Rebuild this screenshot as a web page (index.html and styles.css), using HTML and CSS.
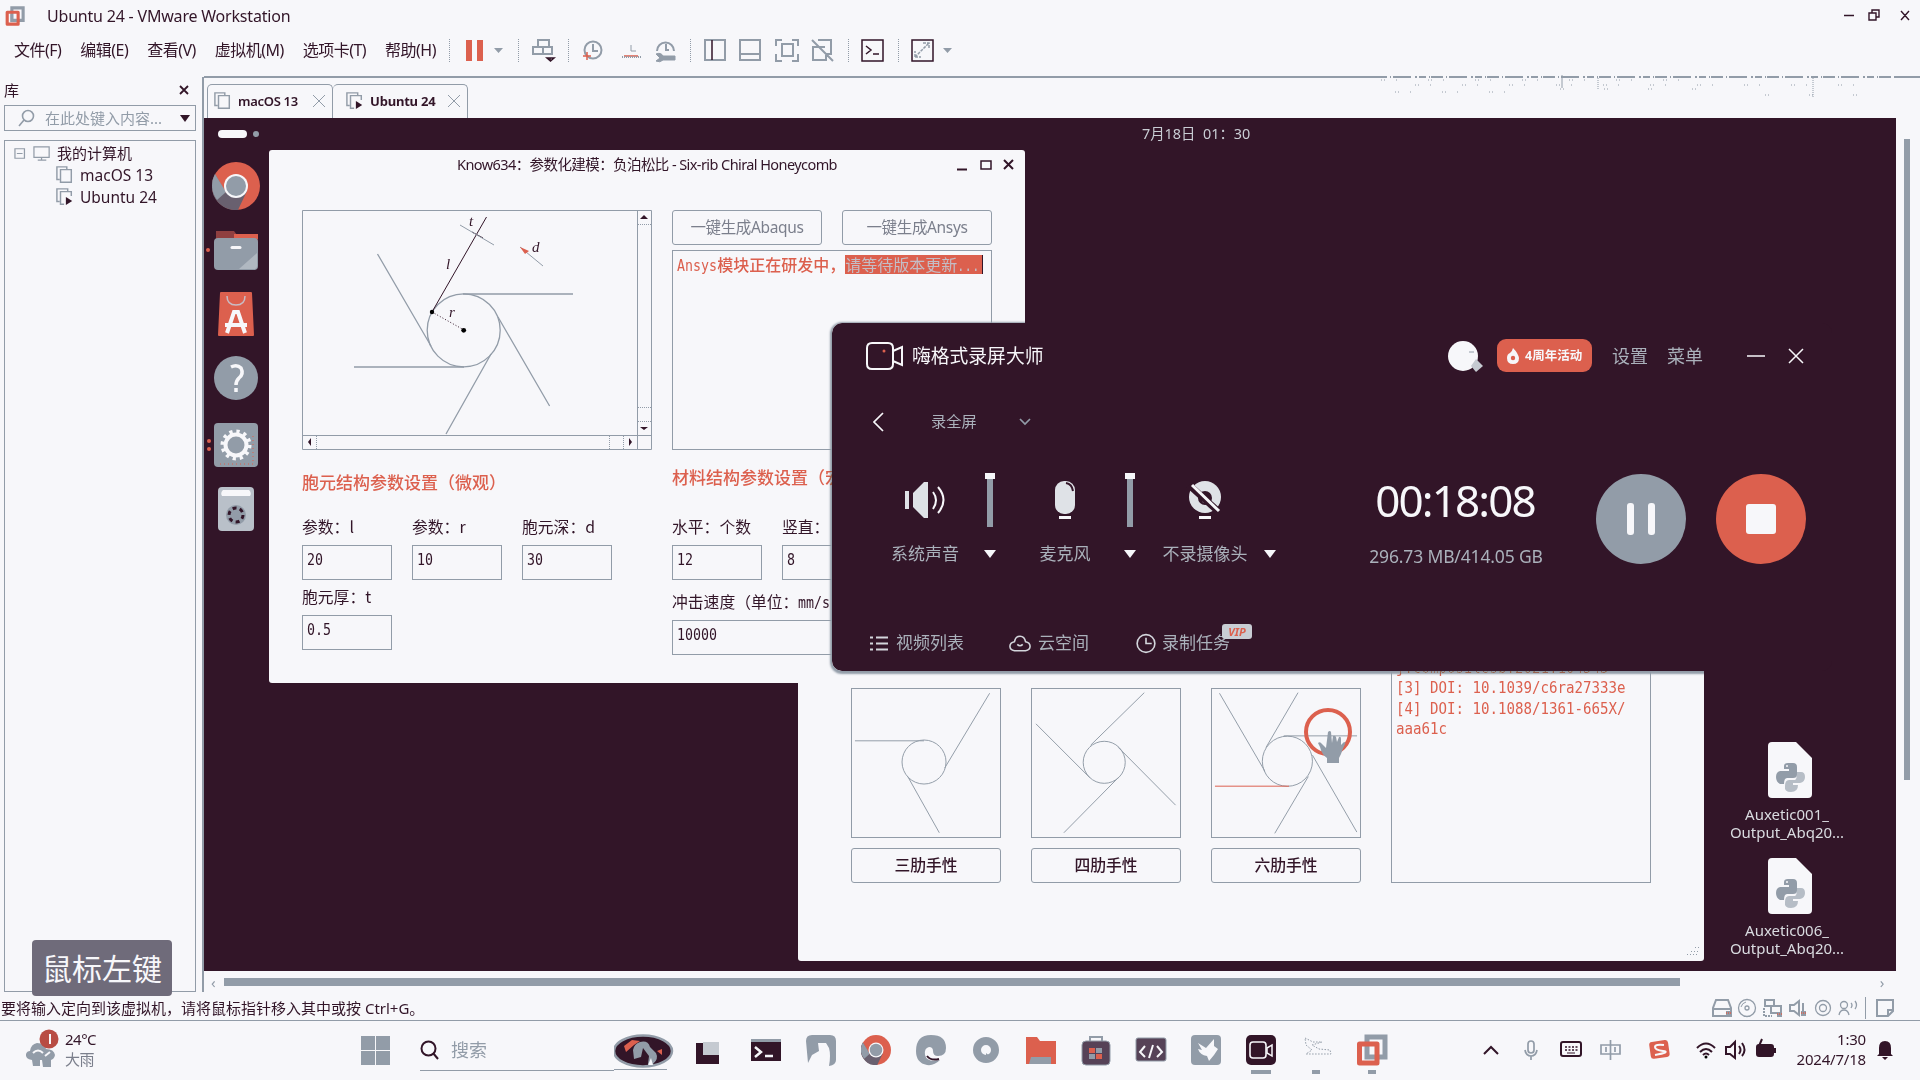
FILE: index.html
```html
<!DOCTYPE html>
<html lang="zh-CN">
<head>
<meta charset="utf-8">
<title>Ubuntu 24 - VMware Workstation</title>
<link rel="stylesheet" href="styles.css">
</head>
<body>
<svg class="defs" aria-hidden="true">
  <defs>
    <symbol id="vmware" viewBox="0 0 32 32"><path d="M11 3h18v20H11z" fill="none" stroke="#929ca8" stroke-width="5"/><path d="M3.500 10h17.500v19H3.500z" fill="none" stroke="#dc604e" stroke-width="5" stroke-linejoin="round"/><path d="M11 13v10h7" fill="none" stroke="#929ca8" stroke-width="4"/></symbol>
    <symbol id="chrome" viewBox="0 0 48 48"><circle cx="24" cy="24" r="24" fill="#dc604e"/><path d="M3 12A24 24 0 0 0 26 48L35 29 14 31Z" fill="#69606f"/><path d="M3 12A24 24 0 0 0 5 38L14 30Z" fill="#929ca8"/><circle cx="24" cy="24" r="12" fill="#f7f7fa"/><circle cx="24" cy="24" r="10" fill="#929ca8"/></symbol>
    <symbol id="vm" viewBox="0 0 20 20"><path d="M4 15H1V1h11v3M5 4h12v14H5z" fill="none" stroke="#929ca8" stroke-width="1.600"/></symbol>
    <symbol id="vmrun" viewBox="0 0 20 20"><path d="M4 15H1V1h12v3M9 18H5V4h12v5" fill="none" stroke="#929ca8" stroke-width="1.600"/><path d="M11 10l7 4.500-7 4.500z" fill="#321528"/></symbol>
    <symbol id="python" viewBox="0 0 44 56"><path d="M4 0H28L44 16V52a4 4 0 0 1-4 4H4a4 4 0 0 1-4-4V4a4 4 0 0 1 4-4Z" fill="#f7f7fa"/><path d="M16 24q0-3 4-3h5q4 0 4 4v8q0 3-4 3h-6q-3 0-3 6h-4q-4-2-4-7t4-6h9v-2h-5Z" fill="#929ca8"/><path d="M29 30h4q4 0 4 5t-5 6h-7v2h5q0 7-7 7-7 0-6-6 0-6 4-6h6q2-1 2-8Z" fill="#b6bdc6"/><circle cx="19" cy="24" r="1" fill="#f7f7fa"/></symbol>
  </defs>
</svg>

<header class="titlebar">
  <svg class="app-logo"><use href="#vmware"/></svg>
  <h1>Ubuntu 24 - VMware Workstation</h1>
  <svg class="win-controls" viewBox="0 0 72 20"><path d="M0 9.500h10M25 7h7v7h-7zM28 7V4h7v7h-3M57 5l8 9m0-9l-8 9"/></svg>
</header>

<nav class="menubar">
  <div class="menus"><span>文件(F)</span><span>编辑(E)</span><span>查看(V)</span><span>虚拟机(M)</span><span>选项卡(T)</span><span>帮助(H)</span></div>
  <svg class="toolbar" viewBox="0 0 520 30">
    <g class="seps"><path d="M5.500 4v24M74.500 4v24M124.500 4v24M246.500 4v24M404.500 4v24M454.500 4v24"/></g>
    <path class="red" d="M22 5h6v21h-6zM33 5h6v21h-6z"/>
    <path class="gray" d="M50 13h9l-4.500 5zM499 13h9l-4.500 5z"/>
    <g class="ln">
      <path d="M94 12V5h11v7M89 12h10v7H89zM99 12h9v7H99z"/>
      <circle cx="149" cy="15" r="8.500"/><path d="M149 9v7h5"/>
      <path d="M187 10v6h5" stroke-width="1"/>
      <path d="M213 16a8.500 8.500 0 1 1 17 0M222 9v6h3"/>
      <path d="M212 19q5-2 7 2h12v4h-12q-3 3-7 1l4-3z" fill="#929ca8" stroke-width="1"/>
      <path d="M261 5h20v20h-20zM296 5h20v20h-20zM296 19h20M338 9h11v12h-11z"/>
      <path d="M332 11V5h6M348 5h6v6M354 19v7h-6M338 26h-6v-7M374 5h13v14h-6M381 12h-12v13h13v-7M368 5l21 21"/>
      <path d="M471 22v-6M471 22h6M471 22l14-14M479 8h6v6" stroke-width="1.500" stroke-dasharray="3 1"/>
    </g>
    <path class="ink" d="M268 5v20M106 23v3M103 23h7l-3.500 3zM418 5h21v21h-21zM422 11l5 4-5 4M429 19h6M468 5h21v21h-21z"/>
    <path class="redline" d="M139 21h8M143 17v8M180 21h14"/>
    <path class="ln" stroke-dasharray="1 1" d="M178 22h20"/>
  </svg>
</nav>

<div class="main">
  <aside class="library">
    <div class="lib-head"><b>库</b><svg viewBox="0 0 10 10"><path d="M1 1l8 8m0-8l-8 8"/></svg></div>
    <div class="lib-search"><svg viewBox="0 0 18 18"><circle cx="11" cy="7" r="5.500"/><path d="M7 11l-5 6"/></svg><span>在此处键入内容...</span><i></i></div>
    <div class="tree">
      <div class="node root"><svg viewBox="0 0 40 20"><path d="M1 5h10v10H1zM3 10h6M21 3h16v11H21zM29 14v3M25 17h9"/></svg>我的计算机</div>
      <div class="node"><svg><use href="#vm"/></svg>macOS 13</div>
      <div class="node"><svg><use href="#vmrun"/></svg>Ubuntu 24</div>
    </div>
  </aside>

  <section class="console">
    <svg class="noise" viewBox="0 0 520 26"><path stroke-dasharray="12 3 1 2 18 4 2 2 7 3 1 1" d="M0 2h520"/><path class="thin" stroke-dasharray="1 2 1 11 1 31" d="M6 5h300M40 10h440M20 17h140"/><path class="thin" stroke-dasharray="1 2 1 40" d="M185 14h160M390 20h130"/><path d="M187 0v13" stroke-width="1"/><path class="thin" stroke-dasharray="1 1" d="M223 3v12M438 3v20"/></svg>
    <div class="tabs">
      <div class="tab"><svg><use href="#vm"/></svg>macOS 13<i></i></div>
      <div class="tab active"><svg><use href="#vmrun"/></svg>Ubuntu 24<i></i></div>
    </div>
    <div class="view">
      <div class="guest">
        <div class="topbar"><span class="pill"></span><span class="dot"></span><time>7月18日&nbsp; 01：30</time></div>
        <div class="dock">
          <svg viewBox="0 0 56 400">
            <svg x="7" y="8" width="48" height="48"><use href="#chrome"/></svg>
            <path d="M11 77h18l3 4h21v9H11z" fill="#8f3f40"/><path d="M29 80h24v5H29z" fill="#dc604e"/><rect x="9" y="84" width="44" height="32" rx="4" fill="#929ca8"/><path d="M34 115l18-16v13q0 3-3 3z" fill="#b0b8c1"/><path d="M27 93.500h8" stroke="#f7f7fa" stroke-width="3" stroke-linecap="round"/>
            <path d="M16 139h30l2 42H14z" fill="#dc604e" stroke="#dc604e" stroke-width="2" stroke-linejoin="round"/><path d="M22 142q0 9 9 9t9-9" fill="none" stroke="#c9bcc4" stroke-width="1.500"/><path d="M22 179l7-21h4l7 21M20 171h22" fill="none" stroke="#f7f7fa" stroke-width="4"/>
            <circle cx="31" cy="224" r="22" fill="#929ca8"/><path d="M26 213q6-3 10 1 3 6-2 10-3 3-3 7M31 234v4" fill="none" stroke="#f7f7fa" stroke-width="3.500"/>
            <rect x="9" y="269" width="44" height="44" rx="4" fill="#929ca8"/><circle cx="31" cy="291" r="10.500" fill="none" stroke="#f7f7fa" stroke-width="4"/><circle cx="31" cy="291" r="13.500" fill="none" stroke="#f7f7fa" stroke-width="4" stroke-dasharray="3.200 3.868"/><path d="M15 310h36M48 282v26" stroke="#dc604e" stroke-dasharray="1 3"/>
            <rect x="13" y="333" width="36" height="44" rx="4" fill="#b9c0c9"/><path d="M18 336h26q3 3 1 6H17q-2-3 1-6z" fill="#f7f7fa"/><circle cx="31" cy="361" r="10" fill="#929ca8"/><circle cx="31" cy="361" r="7" fill="none" stroke="#321528" stroke-width="3" stroke-dasharray="4 3.330"/>
            <g fill="#dc604e"><circle cx="3" cy="96" r="2"/><circle cx="4" cy="287" r="2"/><circle cx="4" cy="295" r="2"/></g>
          </svg>
        </div>
        <div class="desk-icon first"><svg><use href="#python"/></svg><p>Auxetic001_<br>Output_Abq20...</p></div>
        <div class="desk-icon second"><svg><use href="#python"/></svg><p>Auxetic006_<br>Output_Abq20...</p></div>

        <div class="window picker">
          <div class="shapes">
            <svg class="shape" viewBox="0 0 150 150"><circle cx="73" cy="74" r="22.300"/><path d="M3 52.500h70M139.500 4.300L94 80M56.500 88.700l32 57"/></svg>
            <svg class="shape" viewBox="0 0 150 150"><circle cx="73.200" cy="74.300" r="21.300"/><path d="M113.800 3.700L59.400 57M4 35.300L58.700 90M145.500 117.700l-58-58.500M32.300 145.700L88 89.300"/></svg>
            <svg class="shape" viewBox="0 0 150 150"><circle cx="76.400" cy="73.200" r="25.400"/><path d="M7.600 4.300l46 79M87.200 3.700L54.700 59.300M72.700 47.500H147M101.800 67l45 78M97.600 88.700l-34 57.600"/><path class="hot" d="M3 98.500h75"/></svg>
            <button>三肋手性</button><button>四肋手性</button><button>六肋手性</button>
          </div>
          <div class="refs"><p>j.compositesb.2021.104543<br>[3] DOI: 10.1039/c6ra27333e<br>[4] DOI: 10.1088/1361-665X/<br>aaa61c</p></div>
          <svg class="grip" viewBox="0 0 12 10"><path d="M0 8.500h12M4 5.500h8M8 1.500h4" stroke-dasharray="1 2"/></svg>
        </div>

        <div class="window model">
          <div class="win-title">Know634：参数化建模：负泊松比 - Six-rib Chiral Honeycomb
            <svg viewBox="0 0 60 12"><path d="M1 10.500h10"/><path d="M25 2h10v8H25z" stroke-width="1.500"/><path d="M48 1l9 9m0-9l-9 9"/></svg></div>
          <div class="cols">
            <div class="col">
              <svg class="canvas" viewBox="302 210 350 240">
                <g class="frame"><path d="M302.500 210.500h349v239h-349zM637.500 210v239M302 435.500h349"/><path d="M638 224.500h13M638 407.500h13M638 421.500h13M316.500 436v13M609.500 436v13M623.500 436v13" stroke-dasharray="1 1"/></g>
                <path d="M640 219h8l-4-4zM640 427h8l-4 3zM311 438v8l-3-4zM629 438v8l3-4z" fill="#321528"/>
                <g class="ribs"><circle cx="463.700" cy="330.300" r="36.500"/><path d="M377.500 254L431 346M463 294h110M498 317l51.600 89M491 354l-45 80M354 367h110"/></g>
                <path d="M486.500 217L432 312M472 232l11 6" stroke="#321528"/><path d="M460 225l34 20" stroke="#929ca8"/><path d="M432 312l32 18" stroke="#321528" stroke-dasharray="1 2"/>
                <path d="M520 247l23 19" stroke="#929ca8"/><path d="M520 247l9 4-4 3z" fill="#dc604e"/>
                <circle cx="432" cy="312" r="2.200"/><circle cx="463.700" cy="330.300" r="2.400"/>
                <g class="sym"><text x="469" y="226">t</text><text x="446" y="269">l</text><text x="449" y="317">r</text><text x="532" y="252">d</text></g>
              </svg>
              <h2>胞元结构参数设置（微观）</h2>
              <div class="fields">
                <label>参数：l<output><b>20</b></output></label><label>参数：r<output><b>10</b></output></label><label>胞元深：d<output><b>30</b></output></label>
                <label>胞元厚：t<output><b>0.5</b></output></label>
              </div>
            </div>
            <div class="col right">
              <div class="actions"><button>一键生成Abaqus</button><button>一键生成Ansys</button></div>
              <div class="log"><b>Ansys</b>模块正在研发中，<mark>请等待版本更新<b>...</b></mark></div>
              <h2>材料结构参数设置（宏观）</h2>
              <div class="fields">
                <label>水平：个数<output><b>12</b></output></label><label>竖直：<output><b>8</b></output></label>
                <label class="wide">冲击速度（单位：<b>mm/s</b>）<output><b>10000</b></output></label>
              </div>
            </div>
          </div>
        </div>

        <div class="recorder">
          <div class="rec-head">
            <svg class="cam" viewBox="0 0 38 28"><path d="M6 1h16q5 0 5 5v16q0 5-5 5H6q-5 0-5-5V6q0-5 5-5ZM27 9l9-4v18l-9-4"/><circle cx="18" cy="9" r="1.500" fill="#dc604e" stroke="none"/></svg>
            <strong>嗨格式录屏大师</strong>
            <svg class="avatar" viewBox="0 0 36 32"><circle cx="15" cy="16" r="15"/><path d="M28 19l7 7-7 6-5-6z" fill="#c5cad1"/><path d="M21 12h5" stroke="#929ca8"/></svg>
            <span class="promo"><svg viewBox="0 0 14 18"><path d="M7 1q5 5 6 10 0 6-6 6t-6-6q0-4 3-5 2-1 3-5Z" fill="#f7f7fa"/><circle cx="7" cy="11" r="2.200" fill="#dc604e"/></svg>4周年活动</span>
            <span class="opt">设置</span><span class="opt">菜单</span>
            <svg class="rec-win" viewBox="0 0 58 16"><path d="M0 8h18M42 1l14 14M56 1L42 15"/></svg>
          </div>
          <div class="rec-mode"><svg viewBox="0 0 12 20"><path d="M10 1L1 10l9 9"/></svg><span>录全屏</span><svg class="down" viewBox="0 0 12 8"><path d="M1 1l5 5 5-5"/></svg></div>
          <div class="rec-body">
            <div class="src">
              <svg viewBox="0 0 42 40"><path d="M1 11h4v18H1zM9 13L20 2h4v36h-4L9 27z" fill="#dfe2e7"/><path d="M29 12q6 8 0 17M34 7q11 13 0 26" fill="none" stroke="#f7f7fa" stroke-width="2"/></svg>
              <span class="slider"></span><span>系统声音</span><i></i></div>
            <div class="src">
              <svg viewBox="0 0 42 40"><rect x="11" y="1" width="20" height="33" rx="9" fill="#dfe2e7"/><path d="M22 3q6 1 7 8" fill="none" stroke="#321528" stroke-width="2"/><path d="M15 37.500h12" stroke="#f7f7fa" stroke-width="3"/></svg>
              <span class="slider"></span><span>麦克风</span><i></i></div>
            <div class="src">
              <svg viewBox="0 0 42 40"><circle cx="21" cy="17" r="16" fill="#dfe2e7"/><circle cx="21" cy="18" r="7" fill="#321528"/><circle cx="21" cy="20" r="3" fill="#dfe2e7"/><path d="M5 5l30 27" stroke="#321528" stroke-width="7"/><path d="M8 5l27 26" stroke="#f7f7fa" stroke-width="3"/><path d="M15 37.500h12" stroke="#f7f7fa" stroke-width="3"/></svg>
              <span></span><span>不录摄像头</span><i></i></div>
            <div class="clock"><strong>00:18:08</strong><span>296.73 MB/414.05 GB</span></div>
            <div class="round pause"><i></i><i></i></div>
            <div class="round stop"><i></i></div>
          </div>
          <div class="rec-foot">
            <span class="f1"><svg viewBox="0 0 22 20"><path d="M1 4h3M7 4h12M1 10h3M7 10h12M1 16h3M7 16h12" stroke-width="2"/></svg>视频列表</span>
            <span class="f2"><svg viewBox="0 0 24 20"><path d="M6 18q-5-1-5-5t5-5q1-6 6-6t6 6q5 1 5 5t-5 5zM9 11q3 3 6 0"/></svg>云空间</span>
            <span class="f3"><svg viewBox="0 0 22 22"><circle cx="11" cy="11" r="9.300"/><path d="M11 5v6h6"/></svg>录制任务<em>VIP</em></span>
          </div>
        </div>

        <svg class="cursor" viewBox="0 0 50 60"><circle cx="25" cy="26" r="22"/><path d="M25 26q2-2 3 0l1 11 1-7q2-1 3 1l1 5 2-5q2-1 2 2v6l3-3q2 0 1 2-2 4-4 10l-2 4v5H24v-5q-5-3-7-11l-2-4q2-2 4 1l4 4Z"/></svg>
      </div>
      <div class="vscroll"><i></i></div>
      <div class="hscroll"><span>‹</span><i></i><span>›</span></div>
    </div>
  </section>
</div>

<div class="statusbar">
  <span>要将输入定向到该虚拟机，请将鼠标指针移入其中或按 Ctrl+G。</span>
  <svg viewBox="0 0 184 22"><g class="ln"><path d="M5 3h12l3 8v8H2v-8zM2 12h18"/><circle cx="36" cy="11" r="8.500" stroke-width="1.300"/><circle cx="36" cy="11" r="2" stroke-width="1.300"/><path d="M35 5q-4 1-5 5" stroke-width="1"/><path d="M54 3h9v6h-9zM60 9h10v7H60z"/><path d="M53 11v8h8" stroke-dasharray="2 1"/><path d="M79 8h4l5-4v14l-5-4h-4zM92 6v11"/><circle cx="112" cy="11" r="7.500" stroke-width="1.300"/><circle cx="112" cy="11" r="3.500" stroke-width="1.300"/><path d="M155 0" /><circle cx="133" cy="8" r="3.500" stroke-width="1.300"/><path d="M128 18q1-5 5-5t5 5M140 6q2 2 0 5M144 4q3 4 0 8" stroke-width="1.300"/><path d="M154.500 0v22" stroke-width="1"/><path d="M166 3h16v11l-5 5h-11zM182 13h-5v6"/></g><path class="gray" d="M15 14h5v5h-5zM66 15h5v5h-5zM90 14h5v5h-5z"/><path class="redline" stroke-dasharray="1 1" d="M15 16h5M66 17h5M90 16h5"/></svg>
</div>

<footer class="taskbar">
  <svg class="weather" viewBox="0 0 34 44"><path d="M5 23q1-7 7-8 8 0 9 6 8 0 9 6-1 6-7 5H7q-7-1-6-6 1-3 4-3Z" fill="#929ca8"/><path d="M8 25q5-5 10 0M20 28l5-4" stroke="#f7f7fa" stroke-width="2" fill="none"/><path d="M7 32h8v6H8zM17 32h9v7h-8z" fill="#929ca8"/><circle cx="24" cy="11" r="9.500" fill="#b84c43"/><path d="M25 6v10" stroke="#f7f7fa" stroke-width="2"/></svg>
  <div class="temp"><b>24°C</b><span>大雨</span></div>
  <svg class="start" viewBox="0 0 30 30"><path d="M0 0h14v14H0zM15 0h14v14H15zM0 15h14v14H0zM15 15h14v14H15z"/></svg>
  <div class="search"><svg viewBox="0 0 20 20"><circle cx="8.500" cy="8.500" r="7"/><path d="M13 13l5 6"/></svg><span>搜索</span></div>
  <svg class="apps" viewBox="614 1030 780 48">
    <path d="M614 1069.500h53" stroke="#929ca8"/>
    <ellipse cx="643" cy="1051" rx="29" ry="15.500" fill="#321528" stroke="#929ca8" stroke-width="2.500"/><path d="M624 1046l8-6 8 1-6 4-8 7z" fill="#dc604e"/><path d="M657 1051l5-2v6z" fill="#dc604e"/><path d="M634 1059l-1-9q1-6 7-8 8-2 10 5l6 6q3 6-3 11h-5l1-8-6-8-2 9z" fill="#929ca8"/><path d="M648 1065l3-7 2 7z" fill="#f7f7fa"/>
    <path d="M696 1043h23v21h-23z" fill="#321528"/><path d="M703 1042h16v13h-16z" fill="#c5cad1"/>
    <path d="M751 1040h30v21h-30z" fill="#321528"/><path d="M751 1039h30v3h-30z" fill="#929ca8"/><path d="M755 1047l6 5-6 5M765 1056h8" fill="none" stroke="#f7f7fa" stroke-width="2.500"/>
    <path d="M806 1041q0-6 6-6h18q6 0 6 6v19q0 5-7 6 2-11 0-18l-3-5h-8l1 8-7 4-4 8z" fill="#929ca8"/>
    <svg x="861" y="1035" width="30" height="30"><use href="#chrome"/></svg>
    <path d="M931 1035q15 0 15 13 0 8-8 8-5 0-5-5 0-4-4-4-5 1-4 8 2 8 15 5-6 6-13 5-11-2-11-14 0-16 15-16Z" fill="#929ca8"/><path d="M927 1056q4 5 12 3" stroke="#321528" stroke-width="2" fill="none"/>
    <circle cx="986" cy="1050" r="9" fill="none" stroke="#929ca8" stroke-width="8"/><path d="M986 1053l7 6h-7z" fill="#929ca8"/>
    <path d="M1026 1037h11l3 4h16v23h-30z" fill="#dc604e"/><path d="M1031 1057h20v7h-22z" fill="#929ca8"/>
    <path d="M1090 1042v-5h12v5" fill="none" stroke="#929ca8" stroke-width="2"/><rect x="1082" y="1041" width="28" height="24" rx="4" fill="#564257" stroke="#929ca8"/><path d="M1089 1048h6v5h-6zM1096 1054h6v5h-6z" fill="#dc604e"/><path d="M1096 1048h6v5h-6zM1089 1054h6v5h-6z" fill="#929ca8"/>
    <rect x="1136" y="1038" width="30" height="23" rx="2" fill="#564257" stroke="#929ca8"/><path d="M1145 1046l-5 6 5 5M1157 1046l5 6-5 5M1153 1045l-4 13" fill="none" stroke="#f7f7fa" stroke-width="2"/>
    <rect x="1191" y="1035" width="30" height="30" rx="4" fill="#929ca8"/><path d="M1198 1043l8 5 8-9 0 7 4 3-4 6-5 6-2-5q-7-1-9-7l4 1z" fill="#f7f7fa"/>
    <rect x="1246" y="1035" width="30" height="30" rx="5" fill="#321528"/><rect x="1250" y="1042" width="16" height="16" rx="3" fill="none" stroke="#f7f7fa" stroke-width="1.600"/><path d="M1267 1048l5-3v11l-5-3z" fill="none" stroke="#f7f7fa" stroke-width="1.500"/>
    <path d="M1305 1038l8 4h9l-10 3 7 4 11 1 1 4h-25l6-4-6-5z" fill="none" stroke="#929ca8" stroke-dasharray="1.500 1.500"/>
    <svg x="1356" y="1034" width="32" height="32"><use href="#vmware"/></svg>
    <path d="M1251 1070h20v4h-20zM1312 1070h8v4h-8zM1368 1070h8v4h-8z" fill="#929ca8"/>
  </svg>
  <svg class="tray" viewBox="1480 1030 300 40">
    <g fill="none" stroke="#321528" stroke-width="2"><path d="M1484 1054l7-7 7 7"/><rect x="1561" y="1042" width="20" height="14" rx="2"/><path d="M1565 1047h13M1565 1050h13" stroke-width="1.500" stroke-dasharray="2 1.500"/><path d="M1567 1053h8" stroke-width="1"/><path d="M1697 1048q9-9 18 0M1700 1052q6-6 12 0M1703 1055q3-3 6 0M1726 1047h4l5-5v16l-5-4h-4zM1739 1046q3 4 0 8M1742 1043q5 7 0 13"/><rect x="1757" y="1045" width="16" height="11" rx="2" fill="#321528"/><path d="M1775 1048v5M1762 1039l-3 7h4l-2 4" /></g><circle cx="1706" cy="1057" r="1.500"/>
    <g fill="none" stroke="#929ca8" stroke-width="1.700"><rect x="1528" y="1041" width="6" height="12" rx="3"/><path d="M1525 1050q1 6 6 6t6-6M1531 1056v4M1601 1045h19v9h-19zM1610.500 1040v20M1606 1047v5M1615 1047v5"/></g>
    <rect x="1650" y="1041" width="19" height="17" rx="3" fill="#dc604e" transform="rotate(-8 1659 1050)"/><path d="M1664 1045q-9-1-9 2t8 4-8 4" fill="none" stroke="#f7f7fa" stroke-width="2"/>
  </svg>
  <div class="datetime">1:30<br>2024/7/18</div>
  <svg class="bell" viewBox="0 0 16 20"><path d="M2 14V8q0-7 6-7t6 7v6l2 2H0zM5 17h6l-3 3z"/></svg>
</footer>

<div class="keytip">鼠标左键</div>
</body>
</html>
```

FILE: styles.css
```css
:root { --bg: #f7f7fa; --ink: #321528; --gray: #929ca8; --red: #dc604e; }
* { box-sizing: border-box; }
body { margin: 0; width: 1920px; height: 1080px; overflow: hidden; position: relative; display: flex; flex-direction: column; background: var(--bg); color: var(--ink); font: 15px/20px "Noto Sans", "Noto Sans CJK SC", sans-serif; }
svg { display: block; flex: none; }
i { font-style: normal; }
h1, h2, p { margin: 0; font-weight: 400; }
.defs { position: absolute; width: 0; height: 0; }
.ln { fill: none; stroke: var(--gray); stroke-width: 2; }
.red { fill: var(--red); }
.gray { fill: var(--gray); }
.ink { fill: none; stroke: var(--ink); stroke-width: 1.5; }
.redline { stroke: var(--red); stroke-width: 1.5; }

.titlebar { height: 31px; display: flex; align-items: center; padding: 0 10px 0 5px; }
.app-logo { width: 20px; height: 20px; }
.titlebar h1 { margin-left: 22px; font-size: 16px; letter-spacing: -.2px; }
.win-controls { width: 72px; height: 20px; margin-left: auto; margin-right: -6px; fill: none; stroke: var(--ink); stroke-width: 1.4; }
.menubar { height: 46px; display: flex; align-items: center; padding: 0 0 8px 14px; }
.menus { width: 422px; display: flex; justify-content: space-between; }
.menus span { white-space: nowrap; letter-spacing: -.5px; font-size: 16px; }
.toolbar { width: 520px; height: 30px; margin-left: 8px; }
.seps { stroke: var(--gray); stroke-dasharray: 1 1; }

.main { height: 917px; display: flex; }
.library { width: 202px; padding: 0 0 0 4px; display: flex; flex-direction: column; }
.lib-head { height: 28px; display: flex; justify-content: space-between; align-items: center; width: 182px; padding-bottom: 2px; }
.lib-head b { font-weight: 400; }
.lib-head svg { width: 10px; height: 10px; stroke: var(--ink); stroke-width: 1.8; position: relative; left: 3px; }
.lib-search { width: 192px; height: 26px; border: 1px solid var(--gray); display: flex; align-items: center; color: var(--gray); padding: 0 5px 0 12px; }
.lib-search svg { width: 18px; height: 18px; fill: none; stroke: var(--gray); stroke-width: 1.6; }
.lib-search span { margin-left: 10px; font-size: 15px; letter-spacing: 0; white-space: nowrap; }
.lib-search i { margin-left: auto; border: 5px solid transparent; border-top: 7px solid var(--ink); border-bottom: 0; }
.tree { margin-top: 9px; width: 192px; height: 852px; border: 1px solid var(--gray); padding-top: 1px; }
.node { height: 22px; display: flex; align-items: center; padding-left: 51px; font-size: 15.500px; white-space: nowrap; }
.node svg { width: 18px; height: 20px; margin-right: 6px; }
.node.root { padding-left: 9px; font-size: 15px; }
.node.root svg { width: 38px; height: 19px; margin-right: 5px; fill: none; stroke: var(--gray); stroke-width: 1.300; }

.console { position: relative; flex: 1; height: 915px; border-left: 2px solid var(--gray); }
.noise { position: absolute; left: 1171px; top: -2px; width: 520px; height: 26px; background: var(--bg); stroke: var(--gray); stroke-width: 2; z-index: 1; }
.noise .thin { stroke-width: 1; }
.tabs { height: 42px; border-top: 2px solid var(--gray); display: flex; align-items: flex-end; padding-left: 3px; margin-top: -1px; }
.tab { width: 126px; height: 34px; border: 1px solid var(--gray); border-bottom: 0; border-radius: 5px 5px 0 0; display: flex; align-items: center; padding: 0 0 2px 6px; font: 600 13px "Noto Sans", sans-serif; letter-spacing: -.3px; white-space: nowrap; }
.tab svg { width: 18px; height: 18px; margin-right: 6px; }
.tab i { width: 12px; height: 12px; margin: 0 7px 0 auto; background: linear-gradient(45deg, transparent 46%, var(--gray) 46% 54%, transparent 54%), linear-gradient(-45deg, transparent 46%, var(--gray) 46% 54%, transparent 54%); }
.tab.active { width: 135px; border-left: 0; padding-left: 13px; font-weight: 700; letter-spacing: -.2px; }
.view { display: grid; grid-template-columns: 1692px 24px; grid-template-rows: 853px 20px; }
.guest { position: relative; background: var(--ink); overflow: hidden; }
.vscroll { padding: 21px 0 0 8px; }
.vscroll i { display: block; width: 6px; height: 641px; background: var(--gray); }
.hscroll { display: flex; align-items: center; height: 22px; color: var(--gray); padding-left: 7px; }
.hscroll i { width: 1456px; height: 8px; background: var(--gray); margin: 0 200px 0 8px; flex: none; }

/* guest coordinates start at the desktop's top-left corner */
.topbar { height: 32px; display: flex; align-items: center; padding-left: 14px; color: #c9cdd4; }
.pill { width: 29px; height: 8px; border-radius: 4px; background: var(--bg); }
.dot { width: 6px; height: 6px; border-radius: 3px; background: var(--gray); margin-left: 6px; }
.topbar time { margin-left: 883px; font-size: 14.400px; }
.dock { width: 56px; }
.dock svg { width: 56px; height: 400px; }
.dock svg svg { width: 48px; height: 48px; }
.dock { padding-top: 4px; padding-left: 1px; }
.desk-icon { position: absolute; left: 1516px; width: 134px; display: flex; flex-direction: column; align-items: center; color: #d9dbe0; text-align: center; }
.desk-icon svg { width: 44px; height: 56px; margin-left: 6px; }
.desk-icon p { margin-top: 7px; font: 15px/18px "Noto Sans", sans-serif; white-space: nowrap; }
.first { top: 624px; }
.second { top: 740px; }

.window { position: absolute; background: var(--bg); border-radius: 3px; }
button { font: inherit; color: inherit; background: none; border: 1px solid var(--gray); border-radius: 3px; padding: 0 0 2px; height: 35px; white-space: nowrap; }
.picker { left: 594px; top: 282px; width: 906px; height: 561px; display: flex; padding: 288px 53px 0; gap: 30px; }
.shapes { display: grid; grid-template-columns: repeat(3, 150px); grid-template-rows: 150px 35px; gap: 10px 30px; height: 195px; }
.shape { width: 150px; height: 150px; border: 1px solid var(--gray); fill: none; stroke: var(--gray); stroke-width: 1; }
.shape .hot { stroke: var(--red); }
.shapes button { font-size: 15.800px; font-weight: 500; }
.refs { width: 260px; height: 325px; margin-top: -130px; border: 1px solid var(--gray); padding: 99px 0 0 4px; color: var(--red); }
.refs p { font: 16px/20.400px "DejaVu Sans Mono", monospace; transform: scaleX(.882); transform-origin: 0 0; white-space: nowrap; }
.grip { position: absolute; right: 5px; bottom: 5px; width: 12px; height: 10px; stroke: var(--gray); }

.model { left: 65px; top: 32px; width: 756px; height: 533px; }
.win-title { height: 30px; text-align: center; font: 14.500px/29px "Noto Sans", "Noto Sans CJK SC", sans-serif; letter-spacing: -.58px; white-space: nowrap; }
.win-title svg { position: absolute; right: 9px; top: 9px; width: 60px; height: 12px; fill: none; stroke: var(--ink); stroke-width: 2; }
.cols { display: flex; gap: 20px; padding: 30px 33px; }
.col { width: 350px; }
.col.right { width: 320px; }
.canvas { width: 350px; height: 240px; }
.frame, .ribs { fill: none; stroke: var(--gray); }
.ribs { stroke-width: 1.3; }
.sym { font: italic 15px "Liberation Serif", serif; fill: var(--ink); }
h2 { color: var(--red); font: 500 17px/29px "Noto Sans CJK SC", sans-serif; margin-top: 17px; height: 48px; white-space: nowrap; }
.right h2 { margin-top: 12px; height: 53px; }
.fields { display: grid; grid-template-columns: repeat(3, 90px); gap: 5px 20px; }
.right .fields { gap: 10px 20px; }
.fields label { font: 15.800px/24px "Noto Sans CJK SC", sans-serif; white-space: nowrap; }
.fields output { display: block; height: 35px; margin-top: 6px; border: 1px solid var(--gray); padding-left: 4px; line-height: 25px; }
.fields .wide { grid-column: span 3; }
b { font-weight: 400; }
.fields b, .log b { display: inline-block; font: 16px/20px "DejaVu Sans Mono", monospace; transform: scaleX(.83); transform-origin: 0 50%; }
.fields .wide > b { margin-right: -6px; }
.actions { display: flex; justify-content: space-between; color: #7b7f8c; }
.actions button { width: 150px; font: 15.500px "Noto Sans", "Noto Sans CJK SC", sans-serif; letter-spacing: -.35px; }
.log { margin-top: 5px; height: 200px; border: 1px solid var(--gray); padding: 3px 4px; color: var(--red); font: 500 16px/20px "Noto Sans CJK SC", sans-serif; white-space: nowrap; }
.log > b { margin-right: -8px; }
.log mark { display: inline-block; width: 138px; height: 19px; line-height: 19px; margin-top: 1px; background: var(--red); color: #c4bdc5; border-right: 1px solid var(--ink); vertical-align: top; font-weight: 400; }
.log mark b { font-size: 15px; line-height: 18px; margin-right: -5px; }

.recorder { position: absolute; left: 628px; top: 205px; width: 1000px; height: 348px; border-radius: 10px; background: var(--ink); color: #aab1bb; font: 17px/24px "Noto Sans", "Noto Sans CJK SC", sans-serif; padding-left: 34px; white-space: nowrap; }
/* soft rim that only shows over the light windows behind */
.recorder::before { content: ""; position: absolute; inset: 0; border-radius: 10px; box-shadow: 0 1px 2px 2px var(--gray); mix-blend-mode: darken; pointer-events: none; }
.rec-head { height: 65px; display: flex; align-items: center; }
.cam { width: 38px; height: 28px; fill: none; stroke: var(--bg); stroke-width: 2; }
.rec-head strong { width: 536px; margin-left: 8px; font-size: 18.800px; font-weight: 400; color: var(--bg); }
.avatar { width: 36px; height: 32px; fill: var(--bg); }
.promo { width: 95px; height: 33px; margin-left: 13px; border-radius: 9px; background: var(--red); color: var(--bg); display: flex; align-items: center; font-size: 12.500px; font-weight: 700; padding-left: 9px; }
.promo svg { width: 14px; height: 18px; margin-right: 5px; }
.opt { font-size: 18px; margin-left: 20px; }
.opt + .opt { margin-left: 19px; }
.rec-win { width: 58px; height: 16px; margin-left: 44px; stroke: var(--bg); stroke-width: 1.5; fill: none; }
.rec-mode { margin-top: 17px; height: 34px; display: flex; align-items: center; font-size: 15.200px; padding-left: 7px; }
.rec-mode svg { width: 12px; height: 20px; fill: none; stroke: var(--bg); stroke-width: 1.7; }
.rec-mode span { margin: 0 42px 2px 46px; }
.rec-mode .down { width: 12px; height: 8px; stroke: var(--gray); }
.rec-body { display: flex; margin: 31px 0 0 9px; height: 98px; }
.src { width: 140px; display: grid; grid-template-columns: 100px 30px; grid-template-rows: 60px 28px; row-gap: 10px; justify-items: center; align-items: center; }
.src svg { width: 42px; height: 40px; }
.src i { border: 6px solid transparent; border-top: 8px solid var(--bg); border-bottom: 0; }
.slider { width: 10px; height: 54px; background: linear-gradient(var(--bg) 6px, transparent 6px), linear-gradient(90deg, transparent 2px, var(--gray) 2px 8px, transparent 8px); }
.clock { width: 180px; margin-left: 71px; display: flex; flex-direction: column; align-items: center; }
.clock strong { font: 400 44px/60px "Noto Sans", sans-serif; letter-spacing: -1.900px; color: var(--bg); margin-left: -2px; }
.clock span { margin-top: 14px; font-size: 17.500px; letter-spacing: -.15px; line-height: 24px; }
.round { width: 90px; height: 90px; margin: 4px 0 0 50px; border-radius: 50%; background: var(--gray); display: flex; align-items: center; justify-content: center; gap: 14px; flex: none; }
.round i { width: 7px; height: 32px; border-radius: 3px; background: var(--bg); }
.round.stop { background: var(--red); margin-left: 30px; }
.round.stop i { width: 30px; height: 30px; }
.rec-foot { display: flex; padding: 63px 0 0 3px; }
.rec-foot span { display: flex; align-items: center; position: relative; }
.rec-foot svg { width: 22px; height: 21px; margin-right: 5px; fill: none; stroke: #d3d6dc; stroke-width: 1.7; }
.f1 { width: 140px; }
.f2 { width: 126px; }
.rec-foot .f2 svg { margin-right: 7px; }
.rec-foot em { position: absolute; left: 87px; top: -7px; width: 30px; height: 15px; border-radius: 3px; background: #c9cdd4; color: var(--red); font: italic 700 11px/15px "Noto Sans", sans-serif; text-align: center; }
.cursor { position: absolute; left: 1099px; top: 588px; width: 50px; height: 60px; fill: var(--gray); }
.cursor circle { fill: none; stroke: var(--red); stroke-width: 4; }

.statusbar { height: 26px; display: flex; justify-content: space-between; padding: 3px 25px 0 1px; font-size: 15px; }
.statusbar span { white-space: nowrap; letter-spacing: 0; line-height: 22px; }
.statusbar svg { width: 184px; height: 22px; }
.taskbar { height: 60px; border-top: 1px solid var(--gray); display: flex; align-items: flex-start; }
.weather { width: 34px; height: 44px; margin: 7px 0 0 25px; }
.temp { width: 296px; margin: 8px 0 0 6px; font-size: 15px; }
.temp b, .temp span { display: block; letter-spacing: -.5px; }
.temp span { color: #7b7f8c; }
.start { width: 30px; height: 30px; margin-top: 15px; fill: var(--gray); }
.search { width: 194px; height: 50px; margin-left: 29px; display: flex; align-items: center; font-size: 18px; color: var(--gray); padding-top: 9px; border-bottom: 1px solid var(--gray); }
.search svg { width: 20px; height: 20px; margin-right: 11px; fill: none; stroke: var(--ink); stroke-width: 2; }
.apps { width: 780px; height: 48px; margin-top: 9px; }
.tray { width: 300px; height: 40px; margin: 9px 0 0 86px; }
.datetime { width: 86px; margin-top: 8px; text-align: right; font-size: 15px; letter-spacing: -.2px; }
.bell { width: 16px; height: 20px; margin: 19px 0 0 11px; fill: var(--ink); }
.keytip { position: absolute; left: 32px; top: 940px; width: 140px; height: 56px; border-radius: 4px; background: #6f6b7a; color: var(--bg); font: 30px/55px "Noto Sans CJK SC", sans-serif; text-align: center; }
```
